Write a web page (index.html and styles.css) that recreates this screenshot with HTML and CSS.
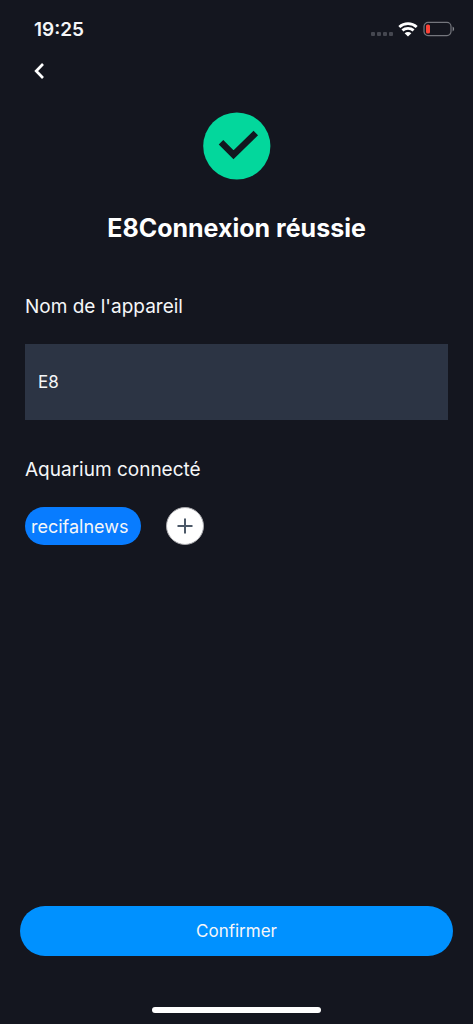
FILE: index.html
```html
<!DOCTYPE html>
<html lang="fr">
<head>
<meta charset="utf-8">
<meta name="viewport" content="width=device-width, initial-scale=1">
<title>Connexion réussie</title>
<link rel="stylesheet" href="styles.css">
</head>
<body>
<div class="screen">
  <header class="status-bar">
    <time class="clock">19:25</time>
    <div class="indicators">
      <svg class="cellular" width="22" height="4" viewBox="0 0 22 4" aria-hidden="true">
        <rect x="0" y="0" width="4" height="4" rx="1"/><rect x="6" y="0" width="4" height="4" rx="1"/><rect x="12" y="0" width="4" height="4" rx="1"/><rect x="18" y="0" width="4" height="4" rx="1"/>
      </svg>
      <svg class="wifi" width="20" height="15" viewBox="0 0 20 15" aria-hidden="true">
        <path d="M1.3 5C6.2 .6 13.8 .6 18.7 5M4.4 8.4C7.6 5.6 12.4 5.6 15.6 8.4" fill="none" stroke="#fff" stroke-width="2.8"/>
        <path d="M10 14.6L6.6 11.2C8.5 9.5 11.5 9.5 13.4 11.2Z" fill="#fff"/>
      </svg>
      <svg class="battery" width="32" height="16" viewBox="0 0 32 16" aria-hidden="true">
        <rect x="1" y="1.4" width="27" height="13.2" rx="4" fill="none" stroke="#74767d" stroke-width="1.2"/>
        <rect x="3" y="3.4" width="4" height="9.2" rx="1.6" fill="#fb4236"/>
        <path d="M29.6 5.6C31.6 6.4 31.6 9.6 29.6 10.4Z" fill="#85878d"/>
      </svg>
    </div>
  </header>
  <nav class="toolbar">
    <button class="back" type="button" aria-label="Retour">
      <svg width="12" height="18" viewBox="0 0 12 18" aria-hidden="true"><path d="M9 2L2.2 9L9 16" fill="none" stroke="#fff" stroke-width="2.7"/></svg>
    </button>
  </nav>
  <main class="content">
    <svg class="success" width="68" height="68" viewBox="0 0 68 68" aria-hidden="true">
      <circle cx="33.8" cy="34" r="33.6" fill="#03d79c"/>
      <path d="M18 30.3L30.5 42.8L52.8 21" fill="none" stroke="#12171f" stroke-width="6.4"/>
    </svg>
    <h1 class="title">E8Connexion réussie</h1>
    <form class="form" id="device-form">
      <label class="label" for="device-name">Nom de l'appareil</label>
      <input class="field" id="device-name" type="text" value="E8">
      <h2 class="label">Aquarium connecté</h2>
      <div class="aquariums">
        <button class="chip" type="button">recifalnews</button>
        <button class="add" type="button" aria-label="Ajouter un aquarium">
          <svg width="16" height="16" viewBox="0 0 16 16" aria-hidden="true"><path d="M8 .5V15.5M.5 8H15.5" stroke="#4c5968" stroke-width="2"/></svg>
        </button>
      </div>
    </form>
  </main>
  <footer class="footer">
    <button class="confirm" type="submit" form="device-form">Confirmer</button>
    <div class="home-indicator"></div>
  </footer>
</div>
</body>
</html>
```
FILE: styles.css
```css
* {
  box-sizing: border-box;
}

body {
  margin: 0;
  background: #14161f;
  color: #f5f6f8;
  font-family: Inter, "Liberation Sans", sans-serif;
}

button,
input {
  margin: 0;
  border: 0;
  color: inherit;
  font-family: inherit;
}

button {
  display: flex;
  align-items: center;
  justify-content: center;
  padding: 0;
  cursor: pointer;
}

svg {
  display: block;
}

.screen {
  display: flex;
  flex-direction: column;
  min-height: 100vh;
}

.status-bar {
  display: flex;
  align-items: center;
  justify-content: space-between;
  height: 58px;
  padding: 0 18px 0 34px;
}

.clock {
  font-size: 19px;
  font-weight: 600;
}

.indicators {
  display: flex;
  align-items: center;
  gap: 5px;
}

.cellular {
  margin-top: 9px;
  fill: #454750;
}

.toolbar {
  padding: 0 28px;
}

.back {
  width: 24px;
  height: 26px;
  background: none;
}

.content {
  display: flex;
  flex: 1;
  flex-direction: column;
  padding: 28px 25px 0;
}

.success {
  align-self: center;
}

.title {
  margin: 32px 0 48px;
  color: #fff;
  font-size: 25px;
  font-weight: 700;
  line-height: 32px;
  text-align: center;
}

.form {
  display: flex;
  flex-direction: column;
}

.label {
  margin: 0 0 22px;
  font-size: 19px;
  font-weight: 400;
  line-height: 30px;
}

.field {
  width: 100%;
  height: 76px;
  margin-bottom: 35px;
  padding: 0 13px;
  border-radius: 0;
  background: #2c3444;
  font-size: 17px;
}

.aquariums {
  display: flex;
  gap: 25px;
}

.chip {
  height: 38px;
  padding: 0 12px 0 6px;
  border-radius: 19px;
  background: #087cff;
  font-size: 18px;
}

.add {
  width: 38px;
  height: 38px;
  border: 1px solid #a9a9ad;
  border-radius: 50%;
  background: #fff;
}

.footer {
  display: flex;
  flex-direction: column;
  align-items: center;
  gap: 51px;
  padding: 24px 20px 11px;
}

.confirm {
  width: 100%;
  height: 50px;
  border-radius: 25px;
  background: #0091ff;
  font-size: 17px;
}

.home-indicator {
  width: 39%;
  height: 6px;
  border-radius: 3px;
  background: #fff;
}
```
